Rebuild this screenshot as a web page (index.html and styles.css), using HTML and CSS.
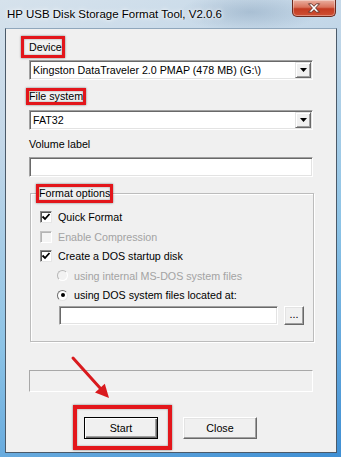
FILE: index.html
```html
<!DOCTYPE html>
<html lang="en">
<head>
  <meta charset="UTF-8">
  <title>HP USB Disk Storage Format Tool, V2.0.6</title>
  <link rel="stylesheet" href="styles.css">
</head>
<body>
  <div class="window">
    <div class="titlebar">
      <span class="title">HP USB Disk Storage Format Tool, V2.0.6</span>
      <div class="close-btn">
        <svg width="14" height="10" viewBox="0 0 14 10">
          <path d="M1.5 0.8 L4.6 0.8 L7 3.3 L9.4 0.8 L12.5 0.8 L8.6 5 L12.5 9.2 L9.4 9.2 L7 6.7 L4.6 9.2 L1.5 9.2 L5.4 5 Z" fill="#fff" stroke="#5a2a22" stroke-width="0.9" stroke-linejoin="round"/>
        </svg>
      </div>
    </div>

    <div class="client">
      <div class="label label-device"><span class="mark mark-device">Device</span></div>
      <div class="combo">
        <span class="combo-text">Kingston DataTraveler 2.0 PMAP (478 MB) (G:\)</span>
        <span class="combo-btn"><svg width="7" height="4" viewBox="0 0 7 4"><path d="M0 0 H7 L3.5 4 Z" fill="#000"/></svg></span>
      </div>

      <div class="label label-fs"><span class="mark mark-fs">File system</span></div>
      <div class="combo combo-fs">
        <span class="combo-text">FAT32</span>
        <span class="combo-btn"><svg width="7" height="4" viewBox="0 0 7 4"><path d="M0 0 H7 L3.5 4 Z" fill="#000"/></svg></span>
      </div>

      <div class="label label-vol">Volume label</div>
      <div class="textbox textbox-vol"></div>

      <div class="group">
        <div class="group-title"><span class="mark mark-opts">Format options</span></div>
        <div class="rows">
          <div class="row">
            <span class="check"><svg width="10" height="10" viewBox="0 0 10 10"><path d="M1.5 4.5 L4 7 L8.5 2" fill="none" stroke="#000" stroke-width="1.8"/></svg></span>
            Quick Format
          </div>
          <div class="row disabled">
            <span class="check"></span>
            Enable Compression
          </div>
          <div class="row">
            <span class="check"><svg width="10" height="10" viewBox="0 0 10 10"><path d="M1.5 4.5 L4 7 L8.5 2" fill="none" stroke="#000" stroke-width="1.8"/></svg></span>
            Create a DOS startup disk
          </div>
          <div class="row sub disabled">
            <span class="radio"></span>
            using internal MS-DOS system files
          </div>
          <div class="row sub">
            <span class="radio on"></span>
            using DOS system files located at:
          </div>
        </div>
        <div class="path-row">
          <div class="textbox path"></div>
          <div class="btn btn-small">...</div>
        </div>
      </div>

      <div class="progress"></div>

      <div class="buttons">
        <div class="mark-start"><div class="btn btn-default">Start</div></div>
        <div class="btn">Close</div>
      </div>
    </div>
  </div>

  <svg class="arrow" width="341" height="457" viewBox="0 0 341 457">
    <line x1="73" y1="358" x2="100.5" y2="388.5" stroke="#d91a1e" stroke-width="3" stroke-linecap="round"/>
    <path d="M109 398 L95 392.5 L104.8 383.7 Z" fill="#d91a1e"/>
  </svg>
</body>
</html>
```

FILE: styles.css
```css
body {
  margin: 0;
  width: 341px;
  height: 457px;
  overflow: hidden;
  position: relative;
  font-family: "Liberation Sans", Arial, sans-serif;
  font-size: 10.7px;
  color: #000;
  background:
    radial-gradient(ellipse 70px 20px at 250px 12px, rgba(110, 140, 170, 0.35), transparent),
    linear-gradient(160deg, #d6e2ec 0%, #c3d7e8 25%, #8cc3e6 60%, #3f8fd4 100%);
}
.titlebar {
  height: 28px;
  display: flex;
  justify-content: space-between;
  align-items: flex-start;
  padding: 0 5px 0 7px;
  box-sizing: border-box;
}
.title {
  font-size: 11.5px;
  line-height: 28px;
  text-shadow: 0 0 6px #fff, 0 0 3px #fff;
}
.close-btn {
  width: 44px;
  height: 17px;
  box-sizing: border-box;
  border: 1px solid #6b2a1e;
  border-top: none;
  border-radius: 0 0 5px 5px;
  background: linear-gradient(#eab0a0, #d9735c 45%, #c43b21 55%, #cf5033);
  box-shadow: inset 0 0 0 1px rgba(255, 255, 255, 0.35);
  display: flex;
  align-items: center;
  justify-content: center;
}
.client {
  margin: 0 4px 0 5px;
  height: 423px;
  border: 1px solid #4b5a69;
  border-top-color: #90a7bc;
  background: #f0f0f0;
  padding-left: 23px;
  overflow: hidden;
}
.label {
  height: 13px;
  line-height: 13px;
}
.label-device {
  margin-top: 12px;
}
.label-fs {
  margin-top: 10px;
}
.label-vol {
  margin-top: 8px;
}
.mark {
  position: relative;
  display: inline-block;
}
.mark::after,
.mark-start::after {
  content: "";
  position: absolute;
  border: 3px solid #e3161b;
  box-shadow: 0 0 2px rgba(0, 0, 0, 0.5), inset 0 0 2px rgba(0, 0, 0, 0.4);
  pointer-events: none;
}
.mark-device::after {
  inset: -5px -3px -4px -8px;
}
.mark-fs::after {
  inset: -2px -3px -2px -3px;
}
.mark-opts::after {
  inset: -3px -2px -3px -2px;
}
.combo {
  margin-top: 6px;
  width: 284px;
  height: 20px;
  box-sizing: border-box;
  display: flex;
  align-items: center;
  background: #fff;
  border: 1px solid;
  border-color: #a0a0a0 #fff #fff #a0a0a0;
  box-shadow: inset 1px 1px 0 #696969, inset -1px -1px 0 #e3e3e3;
}
.combo-fs {
  margin-top: 7px;
}
.combo-text {
  padding-left: 3px;
}
.combo-btn {
  margin: 0 1px 0 auto;
  width: 16px;
  height: 16px;
  box-sizing: border-box;
  display: flex;
  align-items: center;
  justify-content: center;
  background: #f0f0f0;
  border: 1px solid;
  border-color: #e3e3e3 #696969 #696969 #e3e3e3;
  box-shadow: inset 1px 1px 0 #fff, inset -1px -1px 0 #a0a0a0;
}
.textbox {
  height: 20px;
  box-sizing: border-box;
  background: #fff;
  border: 1px solid;
  border-color: #a0a0a0 #fff #fff #a0a0a0;
  box-shadow: inset 1px 1px 0 #696969, inset -1px -1px 0 #e3e3e3;
}
.textbox-vol {
  margin-top: 6px;
  width: 284px;
}
.group {
  margin: 16px 0 0 1px;
  width: 284px;
  box-sizing: border-box;
  border: 1px solid #bcbcbc;
  box-shadow: 1px 1px 0 #fff, inset 1px 1px 0 #fff;
  padding-bottom: 16px;
}
.group-title {
  margin: -7px 0 0 7px;
  height: 13px;
  line-height: 13px;
}
.group-title .mark {
  padding: 0 1px;
  background: #f0f0f0;
}
.rows {
  padding-top: 7.25px;
}
.row {
  height: 19.5px;
  display: flex;
  align-items: center;
  padding-left: 9px;
}
.row.sub {
  padding-left: 26px;
}
.row.disabled {
  color: #a3a3a3;
}
.check {
  width: 12px;
  height: 12px;
  box-sizing: border-box;
  margin-right: 6px;
  display: flex;
  align-items: center;
  justify-content: center;
  background: #fff;
  border: 1px solid;
  border-color: #8a8a8a #e6e6e6 #e6e6e6 #8a8a8a;
  box-shadow: inset 1px 1px 0 #555;
}
.disabled .check {
  background: #f4f4f4;
  border-color: #c4c4c4 #fff #fff #c4c4c4;
  box-shadow: inset 1px 1px 0 #b4b4b4;
}
.radio {
  width: 11px;
  height: 11px;
  box-sizing: border-box;
  margin-right: 6px;
  border-radius: 50%;
  background: #fff;
  border: 1px solid;
  border-color: #6e6e6e #e4e4e4 #e4e4e4 #6e6e6e;
  display: flex;
  align-items: center;
  justify-content: center;
}
.radio.on::before {
  content: "";
  width: 4px;
  height: 4px;
  border-radius: 50%;
  background: #000;
}
.disabled .radio {
  background: #f2f2f2;
  border-color: #b8b8b8 #fff #fff #b8b8b8;
}
.path-row {
  margin-top: 1.25px;
  display: flex;
  padding-left: 28px;
}
.path {
  width: 219px;
  height: 19px;
}
.btn {
  width: 74px;
  height: 22px;
  box-sizing: border-box;
  display: flex;
  align-items: center;
  justify-content: center;
  background: #f0f0f0;
  border: 1px solid;
  border-color: #fff #696969 #696969 #fff;
  box-shadow: inset -1px -1px 0 #a0a0a0, inset 1px 1px 0 #e3e3e3;
}
.btn-small {
  margin-left: 6px;
  width: 20px;
  height: 19px;
  line-height: 1;
  padding-bottom: 2px;
}
.btn-default {
  border-color: #000;
  box-shadow: inset 1px 1px 0 #fff, inset -1px -1px 0 #696969, inset -2px -2px 0 #a0a0a0;
}
.progress {
  margin-top: 28px;
  width: 284px;
  height: 22px;
  box-sizing: border-box;
  border: 1px solid;
  border-color: #a8a8a8 #fff #fff #a8a8a8;
}
.buttons {
  margin-top: 25px;
  padding-left: 55px;
  display: flex;
  gap: 25px;
}
.mark-start {
  position: relative;
}
.mark-start::after {
  border-width: 4px;
  inset: -12px -14px -11px -11px;
}
.arrow {
  position: absolute;
  left: 0;
  top: 0;
  pointer-events: none;
}
```
